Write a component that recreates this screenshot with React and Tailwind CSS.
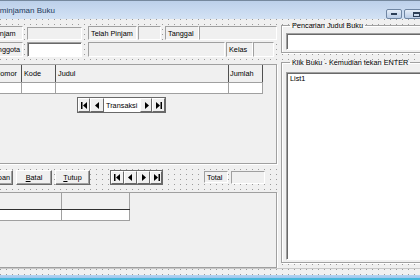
import React from 'react';

// VB6 form designer: "Peminjaman Buku"
const sunken = 'border border-t-[#a0a0a0] border-l-[#a0a0a0] border-b-white border-r-white';
const raised = 'border border-t-white border-l-white border-b-[#696969] border-r-[#696969] bg-[#f0f0f0]';
const dots = 'bg-[radial-gradient(circle_at_0.5px_0.5px,#9a9a9a_0.7px,transparent_0.8px)] bg-[length:6px_5px]';

const Glyph = ({ type }) => {
  const shapes = {
    first: (
      <>
        <rect x="0" y="0" width="1.5" height="7" />
        <polygon points="6,0 2,3.5 6,7" />
      </>
    ),
    prev: <polygon points="5,0 1,3.5 5,7" />,
    next: <polygon points="2,0 6,3.5 2,7" />,
    last: (
      <>
        <polygon points="1,0 5,3.5 1,7" />
        <rect x="5.5" y="0" width="1.5" height="7" />
      </>
    ),
  };
  return (
    <svg width="7" height="7" viewBox="0 0 7 7" fill="#000">
      {shapes[type]}
    </svg>
  );
};

const NavButton = ({ type, className = '' }) => (
  <div className={`${raised} flex items-center justify-center ${className}`}>
    <Glyph type={type} />
  </div>
);

const Label = ({ children, className = '' }) => (
  <div className={`${sunken} bg-[#f0f0f0] pl-[2px] pt-[2px] ${className}`}>{children}</div>
);

const Button = ({ children, className = '' }) => (
  <div className={`${raised} flex items-center justify-center shadow-[inset_-1px_-1px_0_#a0a0a0] ${className}`}>
    {children}
  </div>
);

export default function App() {
  return (
    <div className="w-[420px] h-[280px] overflow-hidden bg-[#f0f0f0] flex flex-col font-['Liberation_Sans',Arial,sans-serif] text-[7.3px] leading-[9px] text-black">
      {/* title bar */}
      <div className="h-[19px] shrink-0 flex items-center border-t border-[#75889d] bg-[linear-gradient(#bcd0ea,#d3e2f4)]">
        <span className="ml-[-10px] text-[8px] text-[#1f3a5c]">Peminjaman Buku</span>
        <div className="ml-auto flex items-start self-start mt-[8px] gap-[2px] mr-[-8px]">
          <div className="w-[16px] h-[10px] rounded-[2px] border border-[#6f86a3] bg-[linear-gradient(#e6eef8,#b9cce6)] flex items-center justify-center">
            <div className="w-[6px] h-[2px] bg-[#2d3f57]" />
          </div>
          <div className="w-[24px] h-[10px] rounded-[2px] border border-[#6f86a3] bg-[linear-gradient(#e6eef8,#b9cce6)] flex items-center justify-center">
            <div className="w-[7px] h-[5px] border border-t-2 border-[#2d3f57]" />
          </div>
        </div>
      </div>

      {/* form body */}
      <div className={`h-[249px] shrink-0 flex ${dots}`}>
        {/* left column */}
        <div className="ml-[-24px] w-[301px] shrink-0 flex flex-col">
          <div className="mt-[7px] h-[14px] flex items-start">
            <Label className="ml-[3px] w-[44px] h-[14px]">No Pinjam</Label>
            <div className={`${sunken} ml-[4px] w-[55px] h-[13px] mt-px bg-[#f0f0f0]`} />
            <Label className="ml-[6px] w-[49px] h-[14px]">Telah Pinjam</Label>
            <div className={`${sunken} ml-px w-[23px] h-[14px] bg-[#f0f0f0]`} />
            <Label className="ml-[4px] w-[34px] h-[14px]">Tanggal</Label>
            <div className={`${sunken} w-[78px] h-[14px] bg-[#f0f0f0]`} />
          </div>
          <div className="mt-[2px] h-[15px] flex items-start">
            <Label className="ml-[3px] w-[44px] h-[15px]">No Anggota</Label>
            <div className={`${sunken} ml-[4px] w-[55px] h-[15px] bg-white shadow-[inset_1px_1px_0_#696969]`} />
            <div className={`${sunken} ml-[6px] w-[137px] h-[15px] bg-[#f0f0f0]`} />
            <Label className="ml-px w-[27px] h-[15px]">Kelas</Label>
            <div className={`${sunken} w-[21px] h-[15px] bg-[#f0f0f0]`} />
          </div>

          {/* upper frame with grid */}
          <div className="mt-[7px] h-[100px] border border-[#a0a0a0] shadow-[1px_1px_0_#fff] bg-[#f0f0f0] flex flex-col">
            <div className="ml-[15px] w-[271px] flex flex-col">
              <div className="h-[18px] flex border-b border-[#a0a0a0]">
                <div className="w-[30px] pl-[3px] flex items-center border-r border-[#505050]">Nomor</div>
                <div className="w-[34px] pl-[2px] flex items-center border-r border-[#505050]">Kode</div>
                <div className="w-[173px] pl-[2px] flex items-center border-r border-[#505050]">Judul</div>
                <div className="w-[34px] pl-[1px] flex items-center border-r border-[#505050]">Jumlah</div>
              </div>
              <div className="h-[11px] flex bg-white border-b border-[#a0a0a0]">
                <div className="w-[30px] border-r border-[#a0a0a0]" />
                <div className="w-[34px] border-r border-[#a0a0a0]" />
                <div className="w-[173px] border-r border-[#a0a0a0]" />
                <div className="w-[34px] border-r border-[#a0a0a0]" />
              </div>
            </div>
            <div className="mt-[3px] ml-[100px] w-[89px] h-[16px] flex border border-[#696969]">
              <NavButton type="first" className="w-[12px]" />
              <NavButton type="prev" className="w-[14px]" />
              <div className="flex-1 bg-white flex items-center pl-[2px]">Transaksi</div>
              <NavButton type="next" className="w-[12px]" />
              <NavButton type="last" className="w-[13px]" />
            </div>
          </div>

          {/* command buttons */}
          <div className="mt-[6px] h-[15px] flex items-start">
            <Button className="ml-px w-[36px] h-[15px] !justify-end pr-[2px]"><span><u>S</u>impan</span></Button>
            <Button className="ml-[3px] w-[36px] h-[15px]"><span><u>B</u>atal</span></Button>
            <Button className="ml-[3px] w-[35px] h-[15px]"><span><u>T</u>utup</span></Button>
            <div className="ml-[20px] w-[53px] h-[15px] flex border border-[#696969]">
              <NavButton type="first" className="w-[13px]" />
              <NavButton type="prev" className="w-[13px]" />
              <NavButton type="next" className="w-[13px]" />
              <NavButton type="last" className="flex-1" />
            </div>
            <Label className="ml-[41px] mt-px w-[24px] h-[12px] !pt-px">Total</Label>
            <div className={`${sunken} ml-[3px] mt-px w-[34px] h-[13px] bg-[#f0f0f0]`} />
          </div>

          {/* lower frame with grid */}
          <div className="mt-[7px] h-[76px] border border-[#a0a0a0] shadow-[1px_1px_0_#fff] bg-[#f0f0f0]">
            <div className="ml-[15px] w-[138px] flex flex-col">
              <div className="h-[17px] flex border-b border-[#303030]">
                <div className="w-[70px] border-r border-[#a0a0a0]" />
                <div className="w-[68px] border-r border-[#a0a0a0]" />
              </div>
              <div className="h-[11px] flex bg-white border-b border-[#a0a0a0]">
                <div className="w-[70px] border-r border-[#a0a0a0]" />
                <div className="w-[68px] border-r border-[#a0a0a0]" />
              </div>
            </div>
          </div>
        </div>

        {/* right column */}
        <div className="ml-[4px] w-[160px] shrink-0 flex flex-col">
          <fieldset className="mt-[2px] border border-[#a0a0a0] shadow-[inset_1px_1px_0_#fff,1px_1px_0_#fff] bg-[#f0f0f0] pl-[4px] pb-[2px]">
            <legend className="ml-[4px] px-[2px] leading-[9px]">Pencarian Judul Buku</legend>
            <div className={`${sunken} mt-[3px] h-[17px] bg-white shadow-[inset_1px_1px_0_#696969]`} />
          </fieldset>
          <fieldset className="mt-[5px] border border-[#a0a0a0] shadow-[inset_1px_1px_0_#fff,1px_1px_0_#fff] bg-[#f0f0f0] pl-[4px] pb-[2px]">
            <legend className="ml-[4px] px-[2px] leading-[9px]">Klik Buku - Kemudian tekan ENTER</legend>
            <div className={`${sunken} mt-[5px] h-[188px] bg-white shadow-[inset_1px_1px_0_#696969] pl-[3px] pt-[1px]`}>List1</div>
          </fieldset>
        </div>
      </div>

      {/* bottom edge */}
      <div className="h-px shrink-0 bg-[#c8c8c8]" />
      <div className={`h-[6px] shrink-0 ${dots}`} />
      <div className="flex-1 bg-[linear-gradient(#b3d3f2,#9cc6ee)] border-b-2 border-[#48b7da]" />
    </div>
  );
}
